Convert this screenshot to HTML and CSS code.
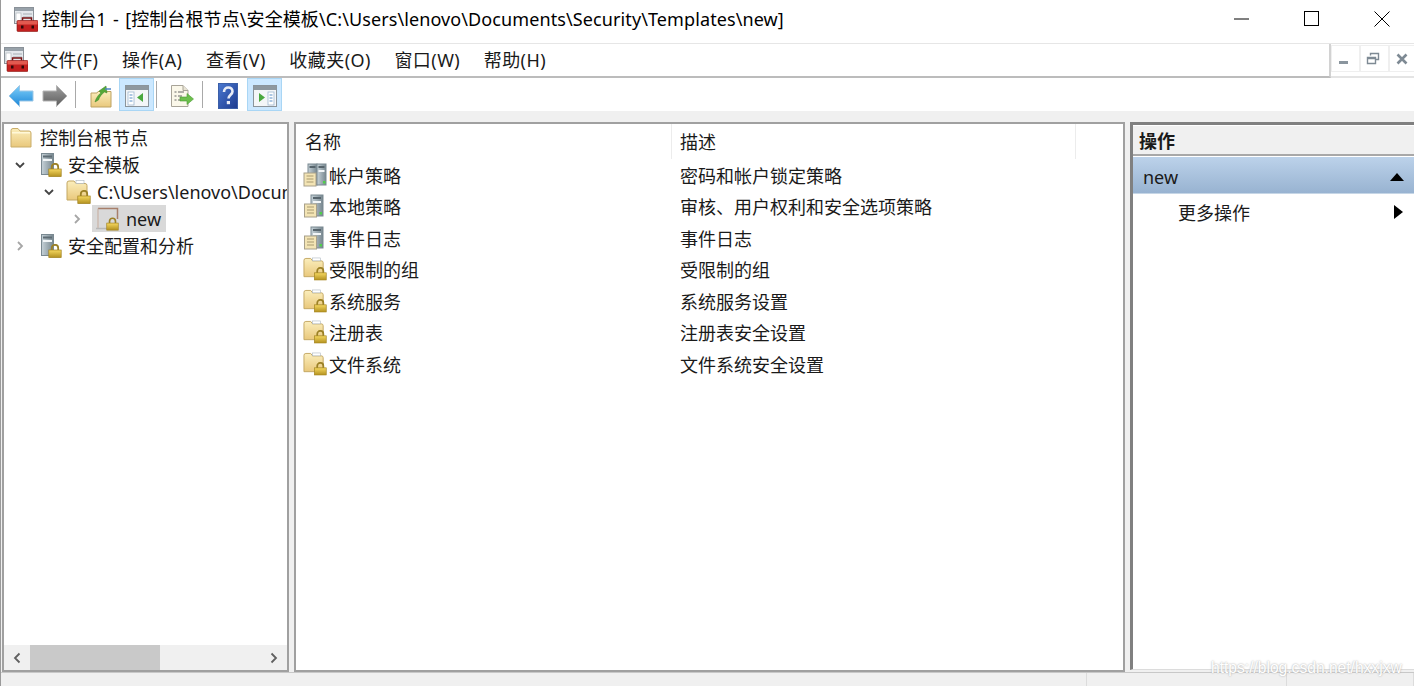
FILE: index.html
```html
<!DOCTYPE html>
<html lang="zh-CN">
<head>
<meta charset="utf-8">
<title>控制台1</title>
<link rel="stylesheet" href="styles.css">
</head>
<body>
<svg class="defs" width="0" height="0" aria-hidden="true">
  <defs>
    <linearGradient id="gFolder" x1="0" y1="0" x2="0" y2="1"><stop offset="0" stop-color="#fbeebc"/><stop offset="1" stop-color="#e9c87c"/></linearGradient>
    <linearGradient id="gBlue" x1="0" y1="0" x2="0" y2="1"><stop offset="0" stop-color="#7fd0fa"/><stop offset="1" stop-color="#1c86d8"/></linearGradient>
    <linearGradient id="gGray" x1="0" y1="0" x2="0" y2="1"><stop offset="0" stop-color="#a0a0a0"/><stop offset="1" stop-color="#5c5c5c"/></linearGradient>
    <linearGradient id="gHelp" x1="0" y1="0" x2="1" y2="1"><stop offset="0" stop-color="#4a78d0"/><stop offset="1" stop-color="#1c3a8e"/></linearGradient>
    <linearGradient id="gServer" x1="0" y1="0" x2="1" y2="0"><stop offset="0" stop-color="#c6d2d8"/><stop offset="1" stop-color="#77878f"/></linearGradient>
    <linearGradient id="gLock" x1="0" y1="0" x2="0" y2="1"><stop offset="0" stop-color="#f6d860"/><stop offset="1" stop-color="#b2901f"/></linearGradient>

    <symbol id="lock" viewBox="0 0 14 14">
      <path d="M3.800 6.500V4a3.200 3.200 0 0 1 6.400 0v2.500" fill="none" stroke="#9c8126" stroke-width="1.800"/>
      <rect x=".8" y="6" width="12.400" height="7.600" fill="url(#gLock)" stroke="#a1821f" stroke-width=".7"/>
    </symbol>

    <symbol id="console" viewBox="0 0 24 25">
      <rect x=".5" y=".5" width="19" height="16" fill="#e4e8ec" stroke="#8a9198"/>
      <rect x="1" y="1" width="18" height="3" fill="#98a2aa"/>
      <rect x="2" y="6" width="5" height="9" fill="#fff" stroke="#a7aeb4" stroke-width=".6"/>
      <path d="M9 7h9M9 10h9" stroke="#a7aeb4"/>
      <path d="M8.500 13.500V11h9v2.500" fill="none" stroke="#7a1414" stroke-width="1.500"/>
      <rect x="3" y="13.500" width="21" height="11" rx="1" fill="#c3201f" stroke="#8b1513" stroke-width=".6"/>
      <rect x="3.500" y="14" width="20" height="3.500" fill="#e25a50"/>
      <rect x="7" y="18.500" width="2.500" height="3" fill="#2f0a0a"/>
      <rect x="17.500" y="18.500" width="2.500" height="3" fill="#2f0a0a"/>
    </symbol>

    <symbol id="back" viewBox="0 0 26 24">
      <path d="M1 12 11.500 1.500V7H25v10H11.500v5.500z" fill="url(#gBlue)" stroke="#9cc7e6"/>
    </symbol>
    <symbol id="forward" viewBox="0 0 26 24">
      <path d="M25 12 14.500 1.500V7H1v10h13.500v5.500z" fill="url(#gGray)" stroke="#b4b4b4"/>
    </symbol>
    <symbol id="up" viewBox="0 0 22 24">
      <path d="M1 9h6l1-1.500h13V23H1z" fill="url(#gFolder)" stroke="#bda263"/>
      <path d="M5 18c1-4 4-8 6-9l-2-2 7-5 1 7-2.500-1c-3 2-5 5-6 8z" fill="#56a838" stroke="#3c8426" stroke-width=".5"/>
      <path d="M15 5h6" stroke="#4f86c6" stroke-width="1.500"/>
    </symbol>
    <symbol id="paneLeft" viewBox="0 0 24 22">
      <rect x=".5" y=".5" width="23" height="21" fill="#f4f6f8" stroke="#8b949b"/>
      <rect x="1" y="1" width="22" height="4" fill="#8e989f"/>
      <rect x="3" y="7" width="6" height="13" fill="#fff" stroke="#9fb7d0" stroke-width=".8"/>
      <path d="M4.500 10h3M4.500 13h3M4.500 16h3" stroke="#5b8fc7"/>
      <path d="M18 8v9l-6-4.500z" fill="#4aa83f"/>
    </symbol>
    <symbol id="paneRight" viewBox="0 0 24 22">
      <rect x=".5" y=".5" width="23" height="21" fill="#f4f6f8" stroke="#8b949b"/>
      <rect x="1" y="1" width="22" height="4" fill="#8e989f"/>
      <rect x="15" y="7" width="6" height="13" fill="#fff" stroke="#9fb7d0" stroke-width=".8"/>
      <path d="M16.500 10h3M16.500 13h3M16.500 16h3" stroke="#5b8fc7"/>
      <path d="M6 8v9l6-4.500z" fill="#4aa83f"/>
    </symbol>
    <symbol id="export" viewBox="0 0 24 24">
      <path d="M1.500 1.500H13l5 5v16H1.500z" fill="#fbf8ea" stroke="#a8a498"/>
      <path d="M13 1.500v5h5" fill="#e8e4d4" stroke="#a8a498"/>
      <path d="M4.500 8h2M8 8h6M4.500 12h2M8 12h4M4.500 16h2M8 16h4" stroke="#666"/>
      <path d="M10 13h7V9.500l6.500 5.500-6.500 5.500V17h-7z" fill="#6cbf4c" stroke="#4c9a34" stroke-width=".6"/>
    </symbol>
    <symbol id="help" viewBox="0 0 20 26">
      <rect x=".5" y=".5" width="19" height="25" fill="url(#gHelp)" stroke="#3b5fa8"/>
      <path d="M6 9c0-3 2-4.500 4.300-4.500S14.500 6 14.500 8.500c0 3-4 3.500-4 7" fill="none" stroke="#e8ecf6" stroke-width="2.600"/>
      <rect x="8.800" y="18" width="3.200" height="3.200" fill="#e8ecf6"/>
    </symbol>
    <symbol id="folder" viewBox="0 0 22 22">
      <path d="M1 3.500Q1 1.500 3 1.500h5l2 2.500h9q2 0 2 2V20H1z" fill="url(#gFolder)" stroke="#c9ad6a"/>
      <rect x="2" y="5" width="18" height="1.500" fill="#fff8d8"/>
    </symbol>
    <symbol id="serverLock" viewBox="0 0 22 24">
      <rect x="1.500" y=".5" width="12" height="21" fill="url(#gServer)" stroke="#7a8991"/>
      <rect x="3" y="2.500" width="9" height="2" fill="#5e6c74"/>
      <rect x="3" y="6" width="9" height="2" fill="#f2f6f8"/>
      <use href="#lock" x="8" y="10" width="14" height="14"/>
    </symbol>
    <symbol id="folderLock" viewBox="0 0 25 24">
      <path d="M1 3Q1 1 3 1h5l2 2.500h9q2 0 2 2V20H1z" fill="url(#gFolder)" stroke="#c3a763"/>
      <rect x="10" y=".5" width="8" height="3" fill="#fff" stroke="#a9b4bc" stroke-width=".6"/>
      <use href="#lock" x="11" y="10" width="14" height="14"/>
    </symbol>
    <symbol id="templateLock" viewBox="0 0 25 24">
      <path d="M3 1.500h19.500V12" fill="none" stroke="#a77f6b" stroke-width="1.500"/>
      <path d="M3 1.500V21" fill="none" stroke="#c9b3a6" stroke-width="1.200"/>
      <path d="M1 21.500h12" stroke="#b8b8b8" stroke-width="1.500"/>
      <use href="#lock" x="11" y="10" width="13" height="14"/>
    </symbol>
    <symbol id="policy" viewBox="0 0 24 24">
      <rect x="8" y="1" width="12" height="21" fill="url(#gServer)" stroke="#7a8991"/>
      <rect x="10" y="3" width="8" height="2" fill="#56646c"/>
      <rect x="10" y="7" width="8" height="2" fill="#f2f6f8"/>
      <rect x="16.500" y="18" width="2.500" height="2.500" fill="#4fd04a"/>
      <rect x="1.500" y="10" width="12" height="13" fill="#f3e4b4" stroke="#a8a08a"/>
      <path d="M4 13h7M4 16h7M4 19h7" stroke="#a89a70"/>
    </symbol>
    <symbol id="policyWide" viewBox="0 0 24 24">
      <rect x="5" y="1" width="9" height="21" fill="url(#gServer)" stroke="#7a8991"/>
      <rect x="14" y="1" width="9" height="21" fill="url(#gServer)" stroke="#7a8991"/>
      <rect x="6.500" y="3" width="6" height="2" fill="#56646c"/>
      <rect x="15.500" y="3" width="6" height="2" fill="#56646c"/>
      <rect x="15.500" y="7" width="6" height="2" fill="#f2f6f8"/>
      <rect x="20" y="18" width="2.500" height="2.500" fill="#4fd04a"/>
      <rect x="1" y="10" width="12" height="13" fill="#f3e4b4" stroke="#a8a08a"/>
      <path d="M3.500 13h7M3.500 16h7M3.500 19h7" stroke="#a89a70"/>
    </symbol>
  </defs>
</svg>

<div class="app">
  <header class="titlebar">
    <svg class="ico-title"><use href="#console"/></svg>
    <span class="title-text">控制台1 - [控制台根节点\安全模板\C:\Users\lenovo\Documents\Security\Templates\new]</span>
    <div class="caption">
      <span class="cap-btn"><svg width="16" height="16" viewBox="0 0 16 16"><path d="M0 8h15" stroke="#000"/></svg></span>
      <span class="cap-btn"><svg width="16" height="16" viewBox="0 0 16 16"><rect x=".5" y=".5" width="14" height="14" fill="none" stroke="#000"/></svg></span>
      <span class="cap-btn"><svg width="16" height="16" viewBox="0 0 16 16"><path d="M.5.500l15 15M15.500.500l-15 15" stroke="#000"/></svg></span>
    </div>
  </header>

  <div class="menurow">
    <nav class="menubar">
      <svg class="ico-menu"><use href="#console"/></svg>
      <span class="menu-item">文件(F)</span>
      <span class="menu-item">操作(A)</span>
      <span class="menu-item">查看(V)</span>
      <span class="menu-item">收藏夹(O)</span>
      <span class="menu-item">窗口(W)</span>
      <span class="menu-item">帮助(H)</span>
    </nav>
    <div class="mdi">
      <span class="mdi-btn"><svg width="12" height="12" viewBox="0 0 12 12"><rect x="1" y="8" width="9" height="3" fill="#8a959e"/></svg></span>
      <span class="mdi-btn"><svg width="14" height="14" viewBox="0 0 14 14"><path d="M4.500 3.500V1.500h8v6h-3M1.500 5.500h8v6h-8zM1.500 6.500h8" fill="none" stroke="#7e8a94" stroke-width="1.400"/></svg></span>
      <span class="mdi-btn"><svg width="12" height="12" viewBox="0 0 12 12"><path d="M1.500 1.500l9 9M10.500 1.500l-9 9" stroke="#7e8a94" stroke-width="2.600"/></svg></span>
    </div>
  </div>

  <div class="toolbar">
    <span class="tb"><svg class="i26"><use href="#back"/></svg></span>
    <span class="tb"><svg class="i26"><use href="#forward"/></svg></span>
    <span class="sep sep-a"></span>
    <span class="tb"><svg class="i22"><use href="#up"/></svg></span>
    <span class="tb on tb-tree"><svg class="i24"><use href="#paneLeft"/></svg></span>
    <span class="sep sep-b"></span>
    <span class="tb"><svg class="i24"><use href="#export"/></svg></span>
    <span class="sep sep-c"></span>
    <span class="tb"><svg class="i-help"><use href="#help"/></svg></span>
    <span class="tb on tb-act"><svg class="i24"><use href="#paneRight"/></svg></span>
  </div>

  <main class="panes">
    <section class="pane tree-pane">
      <div class="tree">
        <div class="tree-row lvl0"><svg class="i22"><use href="#folder"/></svg><span class="lbl">控制台根节点</span></div>
        <div class="tree-row lvl1">
          <svg class="chev" viewBox="0 0 12 12"><path d="M2 4l4 4 4-4" fill="none" stroke="#444" stroke-width="1.800"/></svg>
          <svg class="i-node"><use href="#serverLock"/></svg><span class="lbl">安全模板</span>
        </div>
        <div class="tree-row lvl2">
          <svg class="chev" viewBox="0 0 12 12"><path d="M2 4l4 4 4-4" fill="none" stroke="#444" stroke-width="1.800"/></svg>
          <svg class="i-node wide"><use href="#folderLock"/></svg><span class="lbl-latin">C:\Users\lenovo\Documents</span>
        </div>
        <div class="tree-row lvl3">
          <svg class="chev" viewBox="0 0 12 12"><path d="M4 2l4 4-4 4" fill="none" stroke="#a6a6a6" stroke-width="1.800"/></svg>
          <span class="selected"><svg class="i-node wide"><use href="#templateLock"/></svg><span class="lbl-latin">new</span></span>
        </div>
        <div class="tree-row lvl1">
          <svg class="chev" viewBox="0 0 12 12"><path d="M4 2l4 4-4 4" fill="none" stroke="#a6a6a6" stroke-width="1.800"/></svg>
          <svg class="i-node"><use href="#serverLock"/></svg><span class="lbl">安全配置和分析</span>
        </div>
      </div>
      <div class="hscroll">
        <svg class="sb-arrow" viewBox="0 0 10 12"><path d="M7.500 1.500 3 6l4.500 4.500" fill="none" stroke="#606060" stroke-width="1.800"/></svg>
        <div class="sb-track"><div class="sb-thumb"></div></div>
        <svg class="sb-arrow" viewBox="0 0 10 12"><path d="M2.500 1.500 7 6l-4.500 4.500" fill="none" stroke="#606060" stroke-width="1.800"/></svg>
      </div>
    </section>

    <section class="pane list-pane">
      <div class="list-head">
        <span class="col-name">名称</span>
        <span class="col-desc">描述</span>
      </div>
      <div class="list-row"><span class="cell-name"><svg class="i24"><use href="#policyWide"/></svg><span>帐户策略</span></span><span class="cell-desc">密码和帐户锁定策略</span></div>
      <div class="list-row"><span class="cell-name"><svg class="i24"><use href="#policy"/></svg><span>本地策略</span></span><span class="cell-desc">审核、用户权利和安全选项策略</span></div>
      <div class="list-row"><span class="cell-name"><svg class="i24"><use href="#policy"/></svg><span>事件日志</span></span><span class="cell-desc">事件日志</span></div>
      <div class="list-row"><span class="cell-name"><svg class="i24"><use href="#folderLock"/></svg><span>受限制的组</span></span><span class="cell-desc">受限制的组</span></div>
      <div class="list-row"><span class="cell-name"><svg class="i24"><use href="#folderLock"/></svg><span>系统服务</span></span><span class="cell-desc">系统服务设置</span></div>
      <div class="list-row"><span class="cell-name"><svg class="i24"><use href="#folderLock"/></svg><span>注册表</span></span><span class="cell-desc">注册表安全设置</span></div>
      <div class="list-row"><span class="cell-name"><svg class="i24"><use href="#folderLock"/></svg><span>文件系统</span></span><span class="cell-desc">文件系统安全设置</span></div>
    </section>

    <aside class="action-pane">
      <div class="act-head">操作</div>
      <div class="act-group"><span>new</span><svg class="tri-up" viewBox="0 0 16 8"><path d="M8 0l7 8H1z" fill="#000"/></svg></div>
      <div class="act-item"><span>更多操作</span><svg class="tri-right" viewBox="0 0 9 14"><path d="M0 0l9 7-9 7z" fill="#000"/></svg></div>
    </aside>
  </main>

  <footer class="statusbar">
    <span class="st-main"></span>
    <span class="st-cell"></span>
    <span class="st-cell last"></span>
  </footer>
  <div class="watermark">https://blog.csdn.net/hxxjxw</div>
</div>
</body>
</html>
```

FILE: styles.css
```css
* { box-sizing: border-box; }
html, body { margin: 0; padding: 0; }
body {
  width: 1414px;
  height: 686px;
  overflow: hidden;
  background: #f0f0f0;
  color: #1a1a1a;
  font-family: "Noto Sans", "Noto Sans CJK SC", sans-serif;
  font-size: 18px;
}
.defs { position: absolute; }
.app {
  position: relative;
  width: 1414px;
  height: 686px;
  display: flex;
  flex-direction: column;
  border-left: 1px solid #9a9a9a;
  overflow: hidden;
}
svg { display: block; flex: none; }

/* title */
.titlebar {
  height: 44px;
  flex: none;
  background: #fff;
  display: flex;
  align-items: center;
  padding: 0 0 5px 13px;
  border-bottom: 1px solid #e6e6e6;
}
.ico-title { width: 24px; height: 25px; margin-right: 4px; }
.title-text { line-height: 24px; color: #000; white-space: nowrap; letter-spacing: .1px; word-spacing: 1.5px; }
.caption { margin-left: auto; display: flex; gap: 6px; }
.cap-btn { width: 64px; height: 36px; display: flex; align-items: center; justify-content: center; }

/* menu */
.menurow { height: 34px; flex: none; display: flex; background: #fff; }
.menubar {
  width: 1330px;
  flex: none;
  display: flex;
  align-items: center;
  padding: 0 0 2px 3px;
  border-right: 2px solid #d2d2d2;
  border-bottom: 2px solid #bcbcbc;
}
.ico-menu { width: 24px; height: 25px; margin-right: 12px; }
.menu-item { margin-right: 23.5px; white-space: nowrap; letter-spacing: .45px; }
.mdi { flex: 1; display: flex; padding-top: 1px; border-bottom: 2px solid #e4e4e4; }
.mdi-btn {
  width: 29px; height: 27px;
  display: flex; align-items: center; justify-content: center;
  padding-right: 3px;
  border: 1px solid #efefef;
}

/* toolbar */
.toolbar { height: 33px; flex: none; background: #fff; display: flex; align-items: stretch; padding-left: 3px; }
.tb { width: 34px; display: flex; align-items: center; justify-content: center; padding-top: 2px; }
.tb.on { background: #cce8ff; border: 1px solid #a9d6f5; width: 35px; }
.tb-tree { margin-left: 1px; }
.tb-act { margin-left: 2px; }
.sep { width: 1px; margin: 3px 0; background: #a9a9a9; }
.sep-a { margin-left: 3px; margin-right: 8px; }
.sep-b { margin-left: 2px; margin-right: 8px; }
.sep-c { margin-left: 3px; margin-right: 8px; }
.i26 { width: 26px; height: 24px; }
.i22 { width: 22px; height: 24px; }
.i24 { width: 24px; height: 24px; }
.i-help { width: 20px; height: 26px; }

/* panes */
.panes { height: 561px; flex: none; display: flex; padding-top: 11px; padding-left: 1px; background: #f0f0f0; }
.pane { background: #fff; border: 2px solid #a0a0a0; display: flex; flex-direction: column; }
.tree-pane { width: 287px; flex: none; margin-right: 5px; }
.list-pane { width: 831px; flex: none; margin-right: 5px; }

/* tree */
.tree { flex: 1; overflow: hidden; }
.tree-row { height: 27px; display: flex; align-items: center; white-space: nowrap; }
.tree-row .i22 { margin-right: 8px; width: 22px; height: 22px; }
.lbl { padding-bottom: 2px; }
.lvl0 { padding-left: 6px; }
.lvl1 { padding-left: 10px; }
.lvl2 { padding-left: 39px; }
.lvl3 { padding-left: 67px; }
.chev { width: 12px; height: 12px; margin-right: 14px; }
.lvl2 .chev { margin-right: 11px; }
.lvl3 .chev { margin-right: 9px; }
.i-node { width: 22px; height: 24px; margin-right: 6px; }
.i-node.wide { width: 25px; height: 24px; margin-right: 6px; }
.selected { display: flex; align-items: center; background: #d9d9d9; height: 27px; padding: 0 5px 0 3px; }
.hscroll { height: 25px; flex: none; display: flex; align-items: center; background: #f0f0f0; }
.sb-arrow { width: 10px; height: 12px; margin: 0 8px; }
.sb-track { flex: 1; height: 25px; }
.sb-thumb { width: 130px; height: 25px; background: #c9c9c9; }

/* list */
.list-head { height: 35px; flex: none; display: flex; align-items: center; }
.col-name { width: 376px; padding-left: 9px; height: 35px; line-height: 36px; border-right: 1px solid #ececec; }
.col-desc { width: 404px; padding-left: 8px; height: 35px; line-height: 36px; border-right: 1px solid #ececec; }
.list-row { height: 31.5px; flex: none; display: flex; align-items: center; }
.cell-name { width: 376px; padding-left: 7px; display: flex; align-items: center; gap: 2px; white-space: nowrap; }
.cell-desc { padding-left: 8px; white-space: nowrap; }

/* action pane */
.action-pane {
  flex: 1;
  margin-bottom: 2px;
  background: #fff;
  border-left: 3px solid #808080;
  border-top: 3px solid #808080;
  border-bottom: 1px solid #dcdcdc;
}
.act-head {
  height: 31px;
  padding: 0 0 0 6px;
  line-height: 31px;
  font-weight: 700;
  background: #f0f0f0;
  border-top: 1px solid #fff;
  border-bottom: 2px solid #a8a8a8;
}
.act-group {
  height: 37px;
  margin-top: 1px;
  display: flex;
  align-items: center;
  justify-content: space-between;
  padding: 4px 9px 0 10px;
  background: linear-gradient(#bcd2ea, #98b3d1);
  border-bottom: 1px solid #c6d6e6;
}
.tri-up { width: 16px; height: 8px; }
.act-item {
  height: 37px;
  display: flex;
  align-items: center;
  justify-content: space-between;
  padding: 0 11px 2px 45px;
}
.tri-right { width: 9px; height: 14px; }

/* status */
.statusbar { flex: 1; display: flex; background: #f0f0f0; border-top: 1px solid #c8c8c8; }
.st-main { width: 1085px; }
.st-cell { width: 200px; border-left: 1px solid #dcdcdc; }
.st-cell.last { flex: 1; border-right: 1px solid #dcdcdc; }

.watermark {
  position: absolute;
  left: 1210px;
  top: 655px;
  font-family: "Liberation Sans", sans-serif;
  font-size: 15.6px;
  line-height: 26px;
  color: #fff;
  text-shadow: 0 0 2px #9a9a9a;
  white-space: nowrap;
}
```
